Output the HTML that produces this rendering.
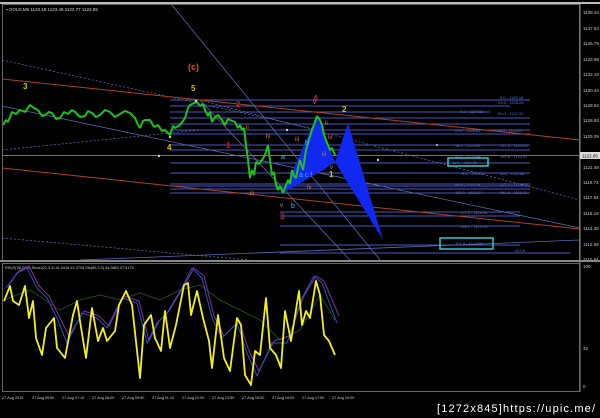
<!DOCTYPE html>
<html><head><meta charset="utf-8"><style>
html,body{margin:0;padding:0;background:#000;width:600px;height:418px;overflow:hidden}
svg{display:block}
text{font-family:"Liberation Sans",sans-serif}
</style></head><body>
<svg width="600" height="418" viewBox="0 0 600 418" xmlns="http://www.w3.org/2000/svg">
<rect width="600" height="418" fill="#000"/>
<rect x="0" y="2" width="600" height="2" fill="#bbb"/>
<rect x="2.5" y="4.5" width="577" height="256" fill="none" stroke="#666" stroke-width="1"/>
<text x="6" y="11" font-size="4.5" fill="#ddd">▪ GOLD,M5  1123.18 1123.49 1122.77 1122.85</text>
<g stroke="#4656c0" stroke-width="1">
<line x1="170" y1="100" x2="530" y2="100"/>
<line x1="170" y1="106" x2="510" y2="106"/>
<line x1="170" y1="112" x2="490" y2="112"/>
<line x1="170" y1="118" x2="530" y2="118"/>
<line x1="170" y1="124" x2="530" y2="124"/>
<line x1="170" y1="130" x2="530" y2="130"/>
<line x1="170" y1="134" x2="530" y2="134"/>
<line x1="170" y1="145" x2="530" y2="145"/>
<line x1="170" y1="150" x2="530" y2="150"/>
<line x1="170" y1="163" x2="530" y2="163"/>
<line x1="170" y1="173" x2="530" y2="173"/>
<line x1="170" y1="184" x2="530" y2="184"/>
<line x1="170" y1="186" x2="530" y2="186"/>
<line x1="170" y1="189" x2="530" y2="189"/>
<line x1="170" y1="193" x2="530" y2="193"/>
<line x1="280" y1="212" x2="520" y2="212"/>
<line x1="280" y1="216" x2="520" y2="216"/>
<line x1="280" y1="226" x2="520" y2="226"/>
<line x1="280" y1="245" x2="520" y2="245"/>
<line x1="280" y1="253" x2="570" y2="253"/>
</g>
<line x1="2" y1="155.5" x2="580" y2="155.5" stroke="#777" stroke-width="1"/>
<g stroke="#5a68b0" stroke-width="0.8" fill="none">
<line x1="2" y1="106" x2="580" y2="228"/>
<line x1="172" y1="5" x2="380" y2="260"/>
<line x1="200" y1="100" x2="580" y2="200" stroke-dasharray="2,2"/>
<line x1="2" y1="60" x2="320" y2="130" stroke-dasharray="2,2"/>
<line x1="2" y1="150" x2="200" y2="130" stroke-dasharray="2,2"/>
<line x1="2" y1="238" x2="250" y2="260" stroke-dasharray="2,2"/>
<line x1="80" y1="260" x2="580" y2="240"/>
<line x1="200" y1="100" x2="350" y2="260"/>
</g>
<g stroke="#b04020" stroke-width="1" fill="none">
<line x1="2" y1="79" x2="580" y2="140"/>
<line x1="2" y1="168" x2="580" y2="229"/>
</g>
<polygon points="283,193 317,115 335,162 323,170" fill="#1028f0"/>
<polygon points="335,162 348,123 383,240" fill="#1028f0"/>
<polyline fill="none" stroke="#20c020" stroke-width="2" stroke-linejoin="bevel" points="3,125 6,120 8,122 12,112 16,114 20,110 25,112 30,105 34,108 38,110 42,116 45,115 49,112 52,113 56,119 60,118 64,112 68,114 72,110 75,112 80,117 85,116 88,111 92,113 96,117 100,115 105,110 110,112 115,117 120,114 125,111 130,113 135,118 138,125 140,128 143,121 145,120 150,120 154,127 158,125 162,131 165,130 170,135 173,126 175,128 180,125 183,121 185,118 188,108 190,105 194,103 197,102 200,106 203,104 205,110 208,116 210,112 212,122 215,117 218,115 222,120 225,125 228,119 230,120 235,122 238,128 240,125 242,130 244,128 246,145 248,160 250,178 252,170 254,175 256,162 259,164 262,160 265,155 268,145 270,160 272,175 274,172 276,185 278,190 280,186 283,193 286,185 288,180 290,184 292,170 294,176 296,178 298,168 300,160 303,170 306,150 309,140 312,130 315,122 317,116 320,120 322,125 324,135 326,140 328,145 330,150 332,148 335,155"/>
<g fill="#ccd">
<circle cx="196" cy="101" r="1.2"/><circle cx="170" cy="137" r="1.2"/><circle cx="159" cy="156" r="1.2"/>
<circle cx="287" cy="130" r="1.2"/><circle cx="378" cy="160" r="1.2"/><circle cx="437" cy="145" r="1"/>
</g>
<g font-size="8" font-weight="bold">
<text x="23" y="89" fill="#d4c000">3</text>
<text x="191" y="91" fill="#d4c000">5</text>
<text x="167" y="150" fill="#d4c000">4</text>
<text x="188" y="70" fill="#e05020" font-size="9">(c)</text>
<text x="342" y="112" fill="#d4c000">2</text>
<text x="329" y="177" fill="#d4c000">1</text>
<text x="313" y="101" fill="#d02020">4</text>
<text x="280" y="219" fill="#d02020">3</text>
<text x="236" y="107" fill="#c02020">2</text>
<text x="226" y="148" fill="#c02020">1</text>
</g>
<g font-size="6" fill="#e08020">
<text x="246" y="129">ii</text><text x="245" y="144">i</text><text x="266" y="138">iv</text>
<text x="250" y="195">iii</text><text x="280" y="207">v</text><text x="295" y="141">iii</text>
<text x="307" y="189">iv</text><text x="325" y="125">ii</text><text x="328" y="139">iv</text>
<text x="322" y="156">iii</text><text x="313" y="104">v</text><text x="330" y="169">v</text>
</g>
<g font-size="7" fill="#40c0d0">
<text x="291" y="208">b</text><text x="281" y="159">a</text><text x="305" y="145">b</text>
<text x="299" y="177">a c f</text>
</g>
<g font-size="4" fill="#6070d0">
<text x="500" y="99">0.0 - 1129.18</text><text x="498" y="104">23.6 - 1128.28</text>
<text x="460" y="113">0.0 - 1127.62</text><text x="498" y="115">50.0 - 1127.22</text>
<text x="455" y="132">23.6 - 1126.41</text><text x="498" y="132">100 - 1125.23</text>
<text x="455" y="147">38.2 - 1124.85</text><text x="500" y="147">127.2 - 1124.20</text>
<text x="455" y="158">50.0 - 1123.94</text><text x="500" y="158">161.8 - 1122.47</text>
<text x="460" y="175">78.6 - 1120.27</text><text x="500" y="175">200 - 1120.88</text>
<text x="455" y="186">88.6 - 1119.24</text><text x="500" y="186">127.2 - 1119.75</text>
<text x="455" y="194">100.0 - 1118.27</text><text x="500" y="194">261.8 - 1118.22</text>
<text x="460" y="214">127.2 - 1116.06</text><text x="460" y="228">138.2 - 1114.79</text>
<text x="515" y="252">423.6</text>
</g>
<rect x="448" y="158" width="40" height="8" fill="none" stroke="#30c8d0" stroke-width="1.5"/>
<text x="452" y="164" font-size="4" fill="#6070d0">11.8 - 1121.59</text>
<rect x="440" y="238" width="53" height="11" fill="none" stroke="#30c8d0" stroke-width="1.5"/>
<text x="455" y="245" font-size="4" fill="#6070d0">161.8 - 1112.40</text>
<line x1="580" y1="4" x2="580" y2="392" stroke="#888"/>
<g font-size="4.5" fill="#ccc">
<text x="583" y="14">1139.34</text><text x="583" y="30">1137.54</text><text x="583" y="45">1135.79</text>
<text x="583" y="61">1133.99</text><text x="583" y="76">1132.19</text><text x="583" y="92">1130.44</text>
<text x="583" y="107">1128.64</text><text x="583" y="122">1126.84</text><text x="583" y="138">1125.09</text>
<text x="583" y="169">1121.49</text><text x="583" y="184">1119.74</text>
<text x="583" y="199">1117.94</text><text x="583" y="215">1116.19</text><text x="583" y="230">1114.39</text>
<text x="583" y="246">1112.59</text><text x="583" y="261">1110.84</text>
<text x="583" y="268">100</text><text x="583" y="350">32</text><text x="583" y="388">0</text>
</g>
<rect x="580" y="152" width="20" height="7" fill="#ddd"/>
<text x="582" y="157.5" font-size="4.5" fill="#000">1122.85</text>
<rect x="0" y="260" width="600" height="2" fill="#888"/>
<rect x="2.5" y="263.5" width="577" height="128" fill="none" stroke="#666"/>
<text x="5" y="269" font-size="3.8" fill="#ccc">RSI(5) 28.0005  Stoch(21,3,3) 41.0416 49.3749  Sto(89,3,3) 44.9883 47.5179</text>
<g fill="none" stroke-linejoin="round">
<polyline stroke="#1a4a1a" stroke-width="1" points="4,300 30,290 45,300 60,310 80,300 100,295 120,300 140,293 160,300 180,290 200,285 220,300 240,310 260,320 280,340 300,330 320,295 335,320"/>
<polyline stroke="#8030a0" stroke-width="1" transform="translate(4,-4)" points="4,290 15,275 25,270 35,290 45,300 55,320 65,340 80,315 95,320 105,330 120,300 135,305 145,345 155,325 165,315 180,290 190,272 200,280 210,320 220,340 235,325 245,355 255,375 270,345 285,340 300,300 312,280 320,285 335,320"/>
<polyline stroke="#3050c0" stroke-width="1" transform="translate(2,-2)" points="4,290 15,275 25,270 35,290 45,300 55,320 65,345 80,315 95,320 105,330 120,300 135,305 145,345 155,325 165,315 180,290 190,270 200,280 210,320 220,340 235,325 245,355 255,378 270,345 285,345 300,300 312,278 320,285 335,325"/>
<polyline stroke="#f0f020" stroke-width="1.8" points="4,301 10,286 13,301 19,305 25,286 29,318 33,301 36,338 42,355 46,328 54,318 57,348 65,358 73,315 77,301 80,321 86,358 92,308 98,341 103,328 107,341 115,331 119,305 126,291 132,305 140,378 144,325 151,315 155,338 161,351 165,311 170,348 176,325 184,285 188,283 191,315 197,291 203,318 209,341 212,368 218,315 224,358 230,371 237,318 241,325 245,375 251,385 255,351 260,355 266,298 270,348 276,355 281,368 285,311 291,341 299,291 302,325 306,311 310,318 316,281 320,295 324,335 329,341 335,355"/>
</g>
<g font-size="3.8" fill="#ccc">
<text x="2" y="399">27 Aug 2015</text><text x="32" y="399">27 Aug 05:50</text><text x="62" y="399">27 Aug 07:10</text>
<text x="92" y="399">27 Aug 08:00</text><text x="122" y="399">27 Aug 09:50</text><text x="152" y="399">27 Aug 11:10</text>
<text x="182" y="399">27 Aug 12:00</text><text x="212" y="399">27 Aug 13:50</text><text x="242" y="399">27 Aug 15:00</text>
<text x="272" y="399">27 Aug 16:00</text><text x="302" y="399">27 Aug 17:50</text><text x="332" y="399">27 Aug 19:00</text>
</g>
<text x="437" y="412" font-size="11" fill="#fff" font-family="Liberation Mono,monospace" textLength="158">[1272x845]https://upic.me/</text>
</svg>
</body></html>
